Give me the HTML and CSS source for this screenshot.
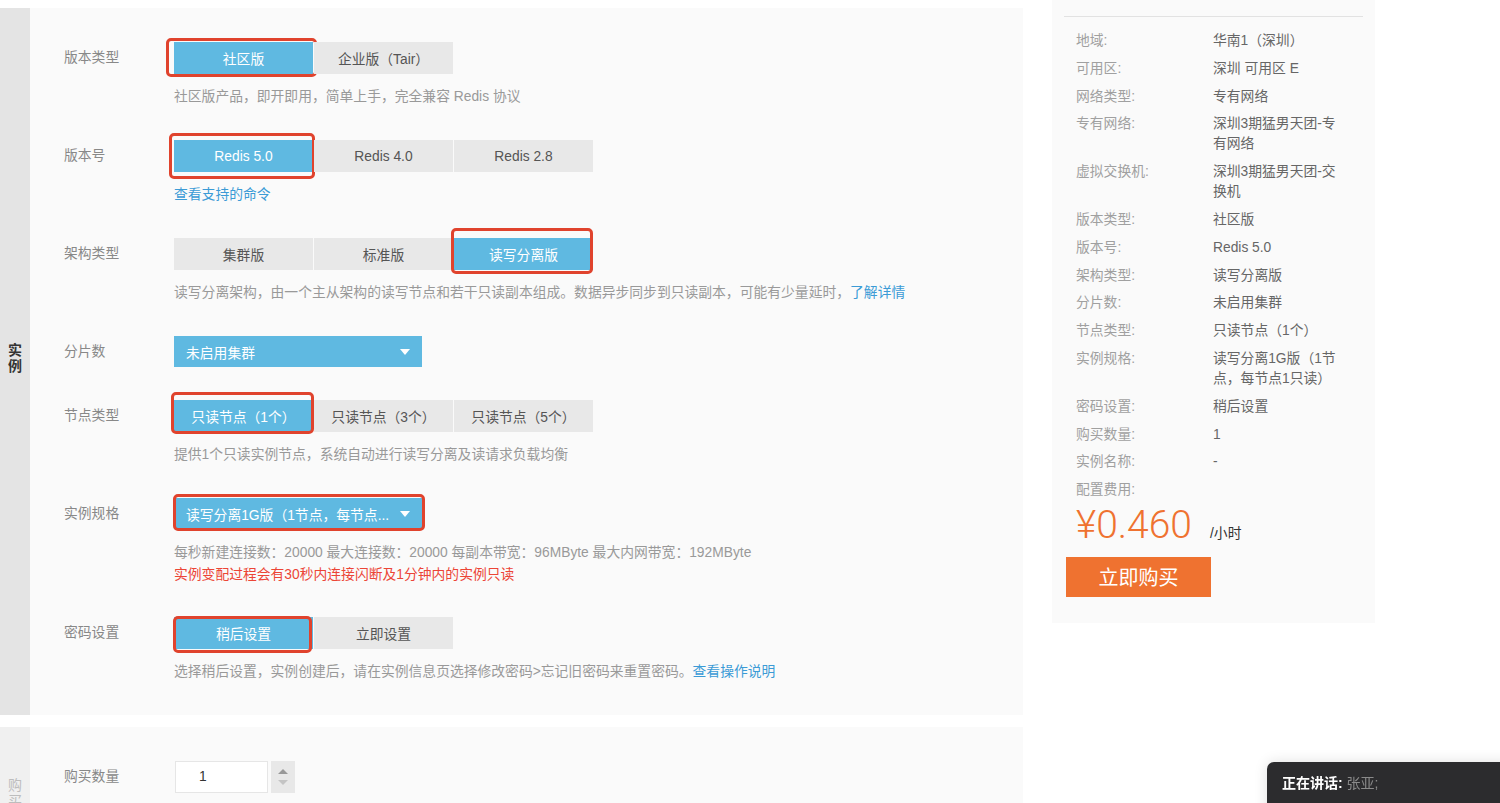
FILE: index.html
```html
<!DOCTYPE html>
<html lang="zh-CN">
<head>
<meta charset="utf-8">
<title>Redis 实例购买</title>
<link rel="stylesheet" href="styles.css">
</head>
<body>
<div class="page">
  <div class="main">
    <section class="panel">
      <div class="side"><span class="side-title">实<br>例</span></div>
      <div class="form">
        <div class="item">
          <div class="label">版本类型</div>
          <div class="control">
            <div class="btns">
              <button class="opt active mark mark-1">社区版</button>
              <button class="opt">企业版（Tair）</button>
            </div>
            <div class="tip">社区版产品，即开即用，简单上手，完全兼容 Redis 协议</div>
          </div>
        </div>
        <div class="item">
          <div class="label">版本号</div>
          <div class="control">
            <div class="btns">
              <button class="opt active mark mark-2">Redis 5.0</button>
              <button class="opt">Redis 4.0</button>
              <button class="opt">Redis 2.8</button>
            </div>
            <div class="tip"><a class="link">查看支持的命令</a></div>
          </div>
        </div>
        <div class="item">
          <div class="label">架构类型</div>
          <div class="control">
            <div class="btns">
              <button class="opt">集群版</button>
              <button class="opt">标准版</button>
              <button class="opt active mark mark-3">读写分离版</button>
            </div>
            <div class="tip">读写分离架构，由一个主从架构的读写节点和若干只读副本组成。数据异步同步到只读副本，可能有少量延时，<a class="link">了解详情</a></div>
          </div>
        </div>
        <div class="item">
          <div class="label label-sel">分片数</div>
          <div class="control">
            <div class="select"><span>未启用集群</span><i class="caret"></i></div>
          </div>
        </div>
        <div class="item">
          <div class="label">节点类型</div>
          <div class="control">
            <div class="btns">
              <button class="opt active mark mark-4">只读节点（1个）</button>
              <button class="opt">只读节点（3个）</button>
              <button class="opt">只读节点（5个）</button>
            </div>
            <div class="tip">提供1个只读实例节点，系统自动进行读写分离及读请求负载均衡</div>
          </div>
        </div>
        <div class="item">
          <div class="label label-sel">实例规格</div>
          <div class="control">
            <div class="select mark mark-5"><span>读写分离1G版（1节点，每节点...</span><i class="caret"></i></div>
            <div class="tip tip-spec">
              <div class="tip-line">每秒新建连接数：20000 最大连接数：20000 每副本带宽：96MByte 最大内网带宽：192MByte</div>
              <div class="tip-line warn">实例变配过程会有30秒内连接闪断及1分钟内的实例只读</div>
            </div>
          </div>
        </div>
        <div class="item">
          <div class="label">密码设置</div>
          <div class="control">
            <div class="btns">
              <button class="opt active mark mark-6">稍后设置</button>
              <button class="opt">立即设置</button>
            </div>
            <div class="tip">选择稍后设置，实例创建后，请在实例信息页选择修改密码&gt;忘记旧密码来重置密码。<a class="link">查看操作说明</a></div>
          </div>
        </div>
      </div>
    </section>
    <section class="panel panel-buy">
      <div class="side side-buy"><span class="side-title side-title-buy">购<br>买</span></div>
      <div class="form">
        <div class="item">
          <div class="label">购买数量</div>
          <div class="control control-row">
            <div class="qty">1</div>
            <div class="spin"><i class="up"></i><i class="down"></i></div>
          </div>
        </div>
      </div>
    </section>
  </div>
  <aside class="summary">
    <div class="rule"></div>
    <dl class="list">
      <div class="srow"><dt>地域:</dt><dd>华南1（深圳）</dd></div>
      <div class="srow"><dt>可用区:</dt><dd>深圳 可用区 E</dd></div>
      <div class="srow"><dt>网络类型:</dt><dd>专有网络</dd></div>
      <div class="srow"><dt>专有网络:</dt><dd>深圳3期猛男天团-专有网络</dd></div>
      <div class="srow"><dt>虚拟交换机:</dt><dd>深圳3期猛男天团-交换机</dd></div>
      <div class="srow"><dt>版本类型:</dt><dd>社区版</dd></div>
      <div class="srow"><dt>版本号:</dt><dd>Redis 5.0</dd></div>
      <div class="srow"><dt>架构类型:</dt><dd>读写分离版</dd></div>
      <div class="srow"><dt>分片数:</dt><dd>未启用集群</dd></div>
      <div class="srow"><dt>节点类型:</dt><dd>只读节点（1个）</dd></div>
      <div class="srow"><dt>实例规格:</dt><dd>读写分离1G版（1节点，每节点1只读）</dd></div>
      <div class="srow"><dt>密码设置:</dt><dd>稍后设置</dd></div>
      <div class="srow"><dt>购买数量:</dt><dd>1</dd></div>
      <div class="srow"><dt>实例名称:</dt><dd>-</dd></div>
      <div class="srow"><dt>配置费用:</dt><dd></dd></div>
    </dl>
    <div class="price"><span class="price-num">¥0.460</span><span class="price-unit">/小时</span></div>
    <button class="buy">立即购买</button>
  </aside>
</div>
<div class="toast"><b>正在讲话:</b> <span class="speaker">张亚;</span></div>
</body>
</html>
```
FILE: styles.css
```css
html, body {
  margin: 0;
  height: 803px;
  overflow: hidden;
}
body {
  font-family: "Liberation Sans", "Noto Sans CJK SC", sans-serif;
  font-size: 13.8px;
  color: #333;
  background: #fff;
}
.page {
  display: flex;
  align-items: flex-start;
}
.main {
  width: 1023px;
  flex: none;
  padding-top: 8px;
}
.panel {
  display: flex;
  background: #fafafa;
}
.panel + .panel {
  margin-top: 12px;
  height: 140px;
}
.side {
  width: 30px;
  flex: none;
  background: #e4e4e4;
  display: flex;
  align-items: center;
  justify-content: center;
}
.side-title {
  font-weight: bold;
  font-size: 14px;
  line-height: 16px;
  color: #333;
  text-align: center;
  margin-top: -8px;
}
.side-buy {
  background: #f0f0f0;
  align-items: flex-start;
  padding-top: 50px;
  box-sizing: border-box;
}
.side-title-buy {
  font-weight: normal;
  color: #bdbdbd;
  margin-top: 0;
}
.form {
  flex: 1;
  padding: 34px 0 33px 34px;
  display: flex;
  flex-direction: column;
  gap: 33px;
}
.item {
  display: flex;
  align-items: flex-start;
}
.label {
  width: 110px;
  flex: none;
  height: 32px;
  line-height: 32px;
  color: #888;
}
.label-sel {
  height: 31px;
  line-height: 31px;
}
.btns {
  display: flex;
  gap: 1px;
}
.opt {
  width: 139px;
  height: 32px;
  padding: 0;
  border: 0;
  background: #e8e8e8;
  color: #555;
  font: inherit;
  position: relative;
}
.opt.active {
  background: #5fb9e1;
  color: #fff;
}
.tip {
  margin-top: 13px;
  height: 20px;
  line-height: 20px;
  color: #999;
  white-space: nowrap;
}
.tip-spec {
  height: 42px;
}
.tip-line {
  height: 21px;
  line-height: 21px;
}
.tip-line + .tip-line {
  margin-top: 1px;
}
.warn {
  color: #ec4536;
}
.link {
  color: #3b9bd6;
  cursor: pointer;
}
.select {
  width: 248px;
  height: 31px;
  box-sizing: border-box;
  padding: 0 12px;
  background: #5fb9e1;
  color: #fff;
  display: flex;
  align-items: center;
  justify-content: space-between;
  position: relative;
}
.caret {
  width: 0;
  height: 0;
  border-left: 5px solid transparent;
  border-right: 5px solid transparent;
  border-top: 6px solid #fff;
}
.mark::after {
  content: "";
  position: absolute;
  border: 3px solid #e0432d;
  border-radius: 5px;
  pointer-events: none;
}
.mark-1::after { top: -4px; right: -4px; bottom: -3px; left: -8px; }
.mark-2::after { top: -7px; right: -2px; bottom: -7px; left: -5px; }
.mark-3::after { top: -10px; right: 0; bottom: -4px; left: -3px; }
.mark-4::after { top: -8px; right: -1px; bottom: -2px; left: -3px; }
.mark-5::after { top: -4px; right: -3px; bottom: -2px; left: -1px; }
.mark-6::after { top: -1px; right: 1px; bottom: -4px; left: -1px; }

.control-row {
  display: flex;
  align-items: stretch;
}
.qty {
  width: 93px;
  height: 32px;
  box-sizing: border-box;
  margin-left: 1px;
  border: 1px solid #e6e6e6;
  background: #fff;
  padding-left: 23px;
  line-height: 30px;
  color: #333;
}
.spin {
  width: 24px;
  height: 32px;
  margin-left: 3px;
  background: #e8e8e8;
  display: flex;
  flex-direction: column;
  align-items: center;
  justify-content: center;
  gap: 6px;
}
.up {
  width: 0;
  height: 0;
  border-left: 5px solid transparent;
  border-right: 5px solid transparent;
  border-bottom: 5px solid #999;
}
.down {
  width: 0;
  height: 0;
  border-left: 5px solid transparent;
  border-right: 5px solid transparent;
  border-top: 5px solid #c4c4c4;
}

.summary {
  width: 323px;
  flex: none;
  margin-left: 29px;
  box-sizing: border-box;
  padding: 16px 12px 26px;
  background: #fafafa;
}
.rule {
  height: 1px;
  background: #e2e2e2;
}
.list {
  margin: 14px 0 0;
  padding-left: 12px;
}
.srow {
  display: flex;
  line-height: 20px;
  margin-bottom: 7.8px;
}
.srow dt {
  width: 137px;
  flex: none;
  color: #a0a0a0;
}
.srow dd {
  margin: 0;
  width: 128px;
  color: #666;
}
.price {
  display: flex;
  align-items: baseline;
  gap: 18px;
  padding-left: 12px;
  margin-top: -3px;
}
.price-num {
  font-family: Roboto, "Liberation Sans", sans-serif;
  font-weight: 300;
  font-size: 39px;
  line-height: 40px;
  color: #ef7230;
}
.price-unit {
  color: #333;
}
.buy {
  display: block;
  margin: 12px 0 0 2px;
  width: 145px;
  height: 40px;
  border: 0;
  padding: 0;
  background: #ef7230;
  color: #fff;
  font-family: inherit;
  font-size: 20px;
}
.toast {
  position: fixed;
  left: 1267px;
  top: 762px;
  width: 260px;
  height: 60px;
  box-sizing: border-box;
  padding: 0 15px;
  border-radius: 7px;
  background: #2c2c2e;
  box-shadow: 0 0 14px rgba(0, 0, 0, 0.12);
  color: #fff;
  font-size: 14px;
  line-height: 42px;
}
.speaker {
  color: #8a8a8a;
}
```
